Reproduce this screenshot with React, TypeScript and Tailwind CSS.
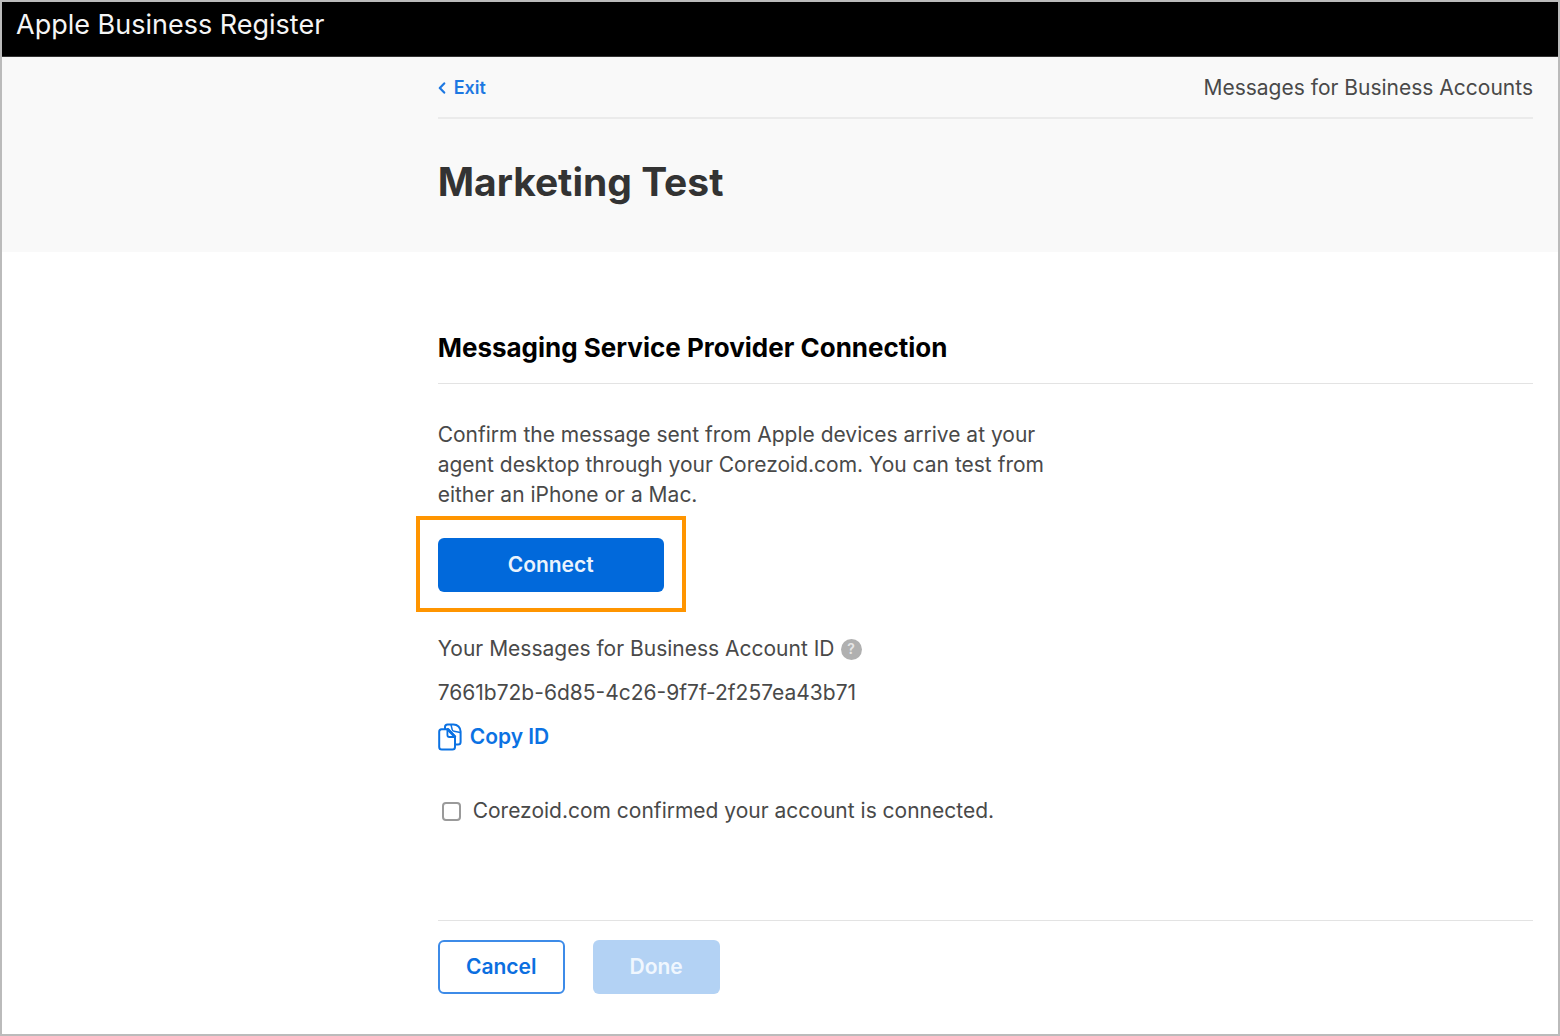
import React, { useState } from 'react';

const ACCOUNT_ID = '7661b72b-6d85-4c26-9f7f-2f257ea43b71';

const CopyIcon: React.FC<{ className?: string }> = ({ className }) => (
  <svg viewBox="0 0 24 28" fill="none" stroke="currentColor" strokeWidth="2" strokeLinejoin="round" strokeLinecap="round" className={className} aria-hidden="true">
    <path d="M7 6V4A2.6 2.6 0 0 1 9.6 1.4H15.5C19.5 1.4 22.6 4.6 22.6 8.6V19A2.6 2.6 0 0 1 20 21.6H17.8" />
    <path d="M13 1.8L14.2 6.6A2 2 0 0 0 16 8.2L22.3 9.4" strokeWidth="1.5" />
    <path d="M3.6 6.2H10L17 13.4V24A2.6 2.6 0 0 1 14.4 26.6H3.8A2.6 2.6 0 0 1 1.2 24V8.7A2.5 2.5 0 0 1 3.6 6.2Z" />
    <path d="M9.4 6.5V12A2 2 0 0 0 11.4 14H16.8" strokeWidth="1.8" />
    <path d="M10 6.5L16.8 13.6" strokeWidth="2.8" />
  </svg>
);

const BackIcon: React.FC<{ className?: string }> = ({ className }) => (
  <svg viewBox="0 0 8 12" fill="none" stroke="currentColor" strokeWidth="2.2" strokeLinecap="round" strokeLinejoin="round" className={className} aria-hidden="true">
    <path d="M6.2 1.4L1.8 6L6.2 10.6" />
  </svg>
);

const App: React.FC = () => {
  const [isConfirmed, setIsConfirmed] = useState(false);

  const handleCopy = () => {
    navigator.clipboard.writeText(ACCOUNT_ID);
  };

  return (
    <div className="min-h-screen flex flex-col border-2 border-[#bbbbbb] bg-white font-['Inter',sans-serif] text-[21px] leading-[30px] text-[#494949]">
      <header className="border-b border-[#333333] bg-black px-3.5 pt-2 pb-4">
        <span className="block text-[27px] text-[#f5f5f5]">Apple Business Register</span>
      </header>

      <section className="bg-[#f9f9f9] pl-[28%] pr-[25px] pb-11">
        <div className="flex items-center justify-between border-b-2 border-[#ebebeb] pt-4 pb-3.5">
          <a href="#" className="flex items-center gap-2 text-[18px] font-semibold text-[#1d78e2]">
            <BackIcon className="h-3 w-2" />
            Exit
          </a>
          <span>Messages for Business Accounts</span>
        </div>
        <h1 className="mt-9 text-[39px] leading-[53px] font-bold text-[#333333]">Marketing Test</h1>
      </section>

      <main className="pl-[28%] pr-[25px]">
        <h2 className="mt-[81px] border-b border-[#e3e3e3] pb-5 text-[26px] font-bold text-black">
          Messaging Service Provider Connection
        </h2>
        <p className="mt-9 max-w-[620px]">
          Confirm the message sent from Apple devices arrive at your agent desktop through your Corezoid.com. You can test from either an iPhone or a Mac.
        </p>

        <div className="relative mt-7 w-fit">
          <button className="block h-[54px] w-[226px] rounded-md bg-[#0169db] font-semibold text-[#eaf3fd]">
            Connect
          </button>
          <div className="pointer-events-none absolute -top-[22px] -right-[22px] -bottom-5 -left-[22px] border-4 border-[#ff9500]" />
        </div>

        <div className="mt-[42px] flex items-center gap-1.5">
          <span>Your Messages for Business Account ID</span>
          <button aria-label="Help" className="flex h-[21px] w-[21px] items-center justify-center rounded-full bg-[#b0b0b0] text-[14px] font-semibold text-[#e6e6e6]">
            ?
          </button>
        </div>
        <p className="mt-3.5">{ACCOUNT_ID}</p>
        <button onClick={handleCopy} className="mt-3.5 flex items-center gap-2 font-semibold text-[#0b72e3]">
          <CopyIcon className="h-7 w-6" />
          Copy ID
        </button>

        <label className="mt-11 ml-1 flex w-fit items-center gap-3">
          <input
            type="checkbox"
            checked={isConfirmed}
            onChange={(e) => setIsConfirmed(e.target.checked)}
            className="h-[19px] w-[19px] appearance-none rounded-[4px] border-2 border-[#9a9a9a] bg-white checked:bg-[#0169db]"
          />
          Corezoid.com confirmed your account is connected.
        </label>

        <footer className="mt-[94px] flex gap-7 border-t border-[#e3e3e3] pt-[19px] pb-10">
          <button className="h-[54px] w-[127px] rounded-md border-2 border-[#3d8be8] bg-white font-semibold text-[#0b6fe0]">
            Cancel
          </button>
          <button disabled={!isConfirmed} className="h-[54px] w-[127px] rounded-md bg-[#0169db] font-semibold text-white disabled:bg-[#b3d2f4] disabled:text-[#f0f7fe]">
            Done
          </button>
        </footer>
      </main>
    </div>
  );
};

export default App;
